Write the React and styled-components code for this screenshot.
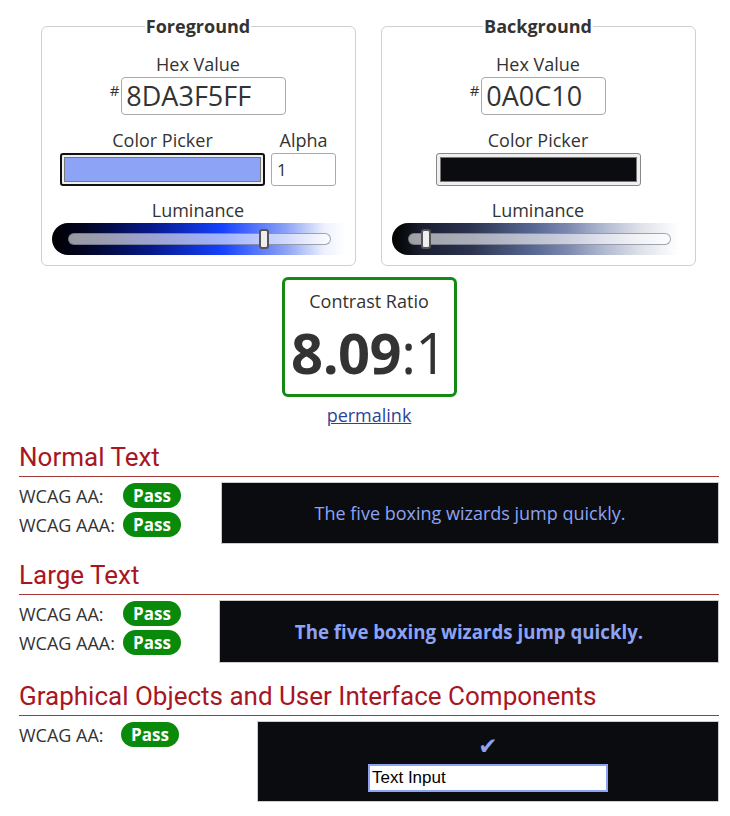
import React from 'react';
import styled, {createGlobalStyle} from 'styled-components';

const GlobalStyle = createGlobalStyle`
  body {
    margin: 8px;
    background: #fff;
    font-family: 'Open Sans', 'Liberation Sans', sans-serif;
    font-size: 18px;
    color: #333;
  }
`;

const Page = styled.div`
  width: 700px;
  margin-left: 11px;
`;

const Pickers = styled.div`
  display: flex;
  justify-content: center;
  gap: 25px;
  padding-top: 6px;
  padding-right: 2px;
`;

const Fieldset = styled.fieldset`
  width: 315px;
  box-sizing: border-box;
  margin: 0;
  padding: 14px 0 10px;
  border: 1px solid #d0d0d0;
  border-radius: 6px;
  display: flex;
  flex-direction: column;
  align-items: center;
`;

const Legend = styled.legend`
  margin: 0 auto;
  padding: 0 1px;
  font-weight: 700;
  font-size: 18px;
  line-height: 24px;
  color: #333;
`;

const Label = styled.div`
  font-size: 18px;
  line-height: 25px;
  text-align: center;
`;

const HexRow = styled.div`
  display: flex;
  align-items: flex-start;
  gap: 2px;
`;

const Hash = styled.span`
  font-size: 15px;
  line-height: 15px;
  margin-top: 6px;
`;

const HexInput = styled.div`
  width: ${p => p.width}px;
  height: 38px;
  box-sizing: border-box;
  border: 1px solid #aaa;
  border-radius: 4px;
  padding: 0 4px;
  font-size: 27px;
  line-height: 36px;
  color: #333;
`;

const PickerRow = styled.div`
  display: flex;
  gap: 6px;
  margin-top: 13px;
`;

const Column = styled.div`
  display: flex;
  flex-direction: column;
  align-items: center;
`;

const Swatch = styled.div`
  width: 205px;
  height: 33px;
  box-sizing: border-box;
  border: ${p => p.focused ? '2px solid #111' : '1px solid #888'};
  border-radius: 3px;
  padding: ${p => p.focused ? '2px' : '3px'};
  background: #efefef;
  display: flex;
`;

const Fill = styled.div`
  flex: 1;
  background: ${p => p.color};
  border: 1px solid #777;
`;

const AlphaInput = styled.div`
  width: 65px;
  height: 33px;
  box-sizing: border-box;
  border: 1px solid #aaa;
  border-radius: 3px;
  padding: 0 5px;
  font-size: 17px;
  line-height: 31px;
`;

const LumBlock = styled.div`
  margin-top: 12px;
  display: flex;
  flex-direction: column;
  align-items: center;
`;

const SliderBar = styled.div`
  width: 293px;
  height: 32px;
  border-radius: 16px 0 0 16px;
  background: ${p => p.gradient};
  padding: 0 14px 0 16px;
  box-sizing: border-box;
  display: flex;
  align-items: center;
`;

const Track = styled.div`
  position: relative;
  flex: 1;
  height: 12px;
  box-sizing: border-box;
  border: 1px solid rgba(90, 95, 110, 0.55);
  border-radius: 6px;
  background: rgba(255, 255, 255, 0.6);
`;

const Thumb = styled.div`
  position: absolute;
  top: -5px;
  width: 10px;
  height: 20px;
  box-sizing: border-box;
  margin-left: -5px;
  border: 2px solid #555;
  border-radius: 3px;
  background: #eee;
`;

const RatioWrap = styled.div`
  display: flex;
  flex-direction: column;
  align-items: center;
  margin-top: 11px;
`;

const RatioBox = styled.div`
  width: 175px;
  height: 120px;
  box-sizing: border-box;
  border: 3px solid #138a13;
  border-radius: 6px;
  display: flex;
  flex-direction: column;
  align-items: center;
  padding-top: 9px;
`;

const Ratio = styled.div`
  font-size: 56px;
  line-height: 64px;
  margin-top: 6px;
  letter-spacing: -0.5px;
  b { font-weight: 700; }
`;

const Permalink = styled.a`
  margin-top: 6px;
  font-size: 18px;
  line-height: 25px;
  color: #2b4497;
  text-decoration: underline;
`;

const Section = styled.section`
  margin-top: ${p => p.top}px;
`;

const Heading = styled.h2`
  margin: 0;
  font-family: Roboto, 'Liberation Sans', sans-serif;
  font-weight: 400;
  font-size: 26px;
  line-height: 30px;
  color: #a8161f;
  padding-bottom: 4px;
  border-bottom: 1px solid #a33a35;
`;

const Body = styled.div`
  display: flex;
  align-items: flex-start;
  margin-top: 5px;
`;

const Results = styled.div`
  width: ${p => p.width}px;
  display: flex;
  flex-direction: column;
  gap: 4px;
  padding-top: 1px;
`;

const ResultRow = styled.div`
  display: flex;
  align-items: center;
`;

const RowLabel = styled.span`
  width: ${p => p.width}px;
  font-size: 18px;
`;

const Pill = styled.span`
  height: 25px;
  padding: 0 10px;
  border-radius: 13px;
  background: #0a8a0a;
  color: #fff;
  font-weight: 700;
  font-size: 17px;
  line-height: 25px;
`;

const Sample = styled.div`
  flex: 1;
  height: ${p => p.height}px;
  box-sizing: border-box;
  border: 1px solid #ccc;
  background: #0a0c10;
  color: #8da3f5;
  display: flex;
  flex-direction: column;
  align-items: center;
  justify-content: center;
  font-size: ${p => p.large ? '18.7px' : '18px'};
  font-weight: ${p => p.large ? 700 : 400};
`;

const Check = styled.div`
  font-family: 'DejaVu Sans', sans-serif;
  font-size: 23px;
  line-height: 28px;
  color: #8da3f5;
  margin-bottom: 4px;
`;

const TextInput = styled.div`
  width: 240px;
  height: 28px;
  box-sizing: border-box;
  border: 2px solid #8da3f5;
  background: #fff;
  color: #000;
  font-family: 'Liberation Sans', Arial, sans-serif;
  font-size: 17px;
  line-height: 24px;
  padding: 0 2px;
`;

const FG_GRADIENT = 'linear-gradient(to right, #000 0%, #020626 12%, #071a8f 35%, #1541ff 58%, #8da3f5 80%, #eef1fd 93%, #fff 100%)';
const BG_GRADIENT = 'linear-gradient(to right, #000 0%, #0a0c10 4%, #1a1e30 10%, #2c3350 27%, #5a6a95 49%, #7d88b0 60%, #b0b8d0 72%, #e0e2ea 85%, #fff 98%)';

const Luminance = ({gradient, value}) => (
  <LumBlock>
    <Label>Luminance</Label>
    <SliderBar gradient={gradient}>
      <Track>
        <Thumb style={{left: `${value * 100}%`}}/>
      </Track>
    </SliderBar>
  </LumBlock>
);

const ResultList = ({rows, width, labelWidth}) => (
  <Results width={width}>
    {rows.map(r => (
      <ResultRow key={r}>
        <RowLabel width={labelWidth}>{r}</RowLabel>
        <Pill>Pass</Pill>
      </ResultRow>
    ))}
  </Results>
);

export default function App() {
  return (
    <Page>
      <GlobalStyle/>
      <Pickers>
        <Fieldset>
          <Legend>Foreground</Legend>
          <Label>Hex Value</Label>
          <HexRow>
            <Hash>#</Hash>
            <HexInput width={165}>8DA3F5FF</HexInput>
          </HexRow>
          <PickerRow>
            <Column>
              <Label>Color Picker</Label>
              <Swatch focused><Fill color="#8da3f5"/></Swatch>
            </Column>
            <Column>
              <Label>Alpha</Label>
              <AlphaInput>1</AlphaInput>
            </Column>
          </PickerRow>
          <Luminance gradient={FG_GRADIENT} value={0.75}/>
        </Fieldset>
        <Fieldset>
          <Legend>Background</Legend>
          <Label>Hex Value</Label>
          <HexRow>
            <Hash>#</Hash>
            <HexInput width={125}>0A0C10</HexInput>
          </HexRow>
          <PickerRow>
            <Column>
              <Label>Color Picker</Label>
              <Swatch><Fill color="#0a0c10"/></Swatch>
            </Column>
          </PickerRow>
          <Luminance gradient={BG_GRADIENT} value={0.067}/>
        </Fieldset>
      </Pickers>

      <RatioWrap>
        <RatioBox>
          <Label>Contrast Ratio</Label>
          <Ratio><b>8.09</b>:1</Ratio>
        </RatioBox>
        <Permalink href="#">permalink</Permalink>
      </RatioWrap>

      <Section top={14}>
        <Heading>Normal Text</Heading>
        <Body>
          <ResultList rows={['WCAG AA:', 'WCAG AAA:']} width={202} labelWidth={104}/>
          <Sample height={62}>The five boxing wizards jump quickly.</Sample>
        </Body>
      </Section>

      <Section top={16}>
        <Heading>Large Text</Heading>
        <Body>
          <ResultList rows={['WCAG AA:', 'WCAG AAA:']} width={200} labelWidth={104}/>
          <Sample height={63} large>The five boxing wizards jump quickly.</Sample>
        </Body>
      </Section>

      <Section top={18}>
        <Heading>Graphical Objects and User Interface Components</Heading>
        <Body>
          <ResultList rows={['WCAG AA:']} width={238} labelWidth={102}/>
          <Sample height={81}>
            <Check>✔</Check>
            <TextInput>Text Input</TextInput>
          </Sample>
        </Body>
      </Section>
    </Page>
  );
}
